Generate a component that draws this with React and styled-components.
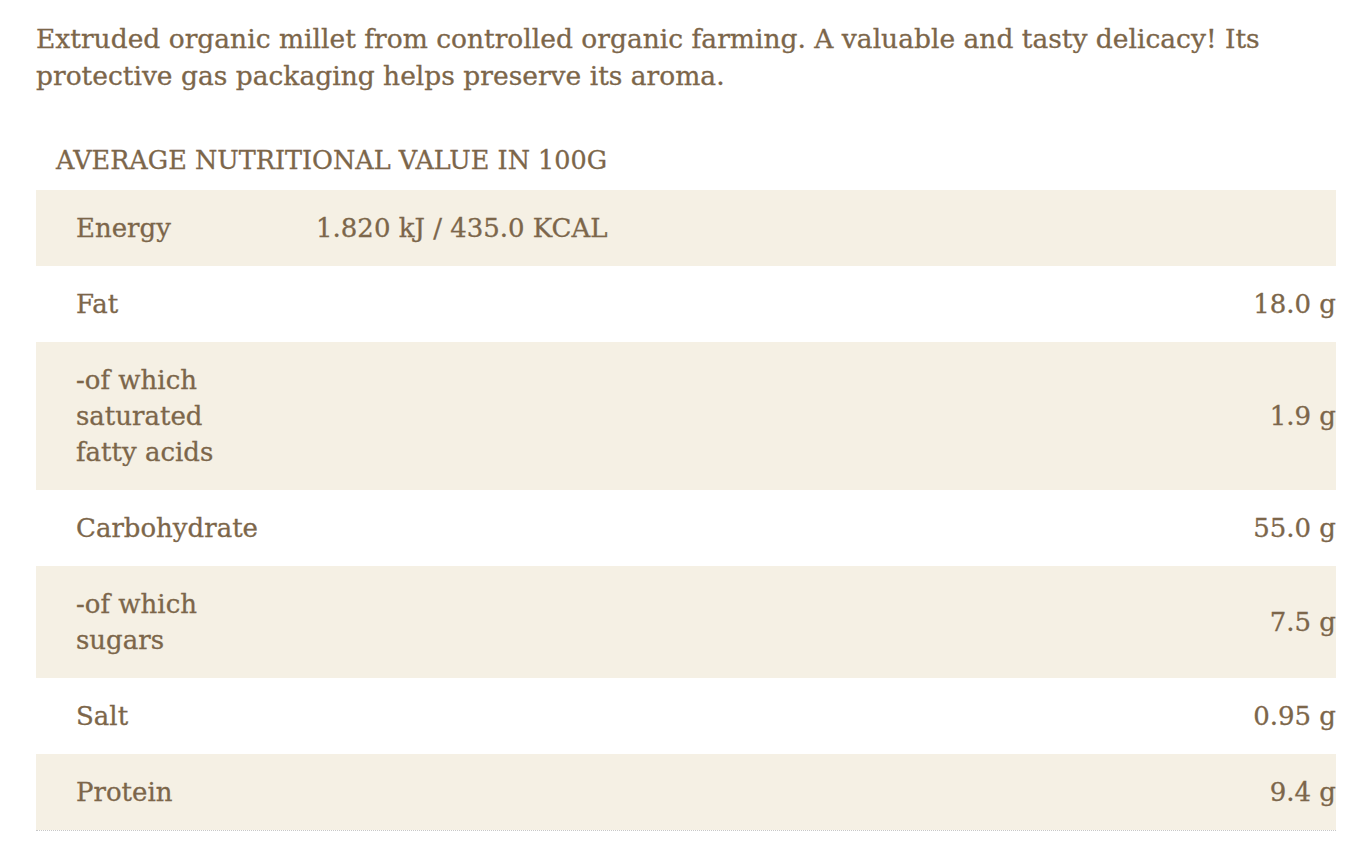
import React from 'react';
import styled, { createGlobalStyle } from 'styled-components';

const GlobalStyle = createGlobalStyle`
  body {
    margin: 0;
    background: #fff;
    font-family: 'DejaVu Serif', 'Liberation Serif', serif;
    color: rgb(124, 102, 74);
    -webkit-text-stroke: 0.3px rgb(124, 102, 74);
  }
`;

const Page = styled.main`
  width: 1300px;
  padding: 20px 0 0 36px;
`;

const Intro = styled.p`
  margin: 0 0 48px;
  font-size: 26.5px;
  line-height: 37px;
`;

const Caption = styled.h3`
  margin: 0;
  padding: 0 0 12px 20px;
  font-size: 25.5px;
  font-weight: 400;
  line-height: 36px;
  text-transform: uppercase;
`;

const Table = styled.div`
  border-bottom: 1px dotted #c8c8c8;
`;

const Row = styled.div`
  display: grid;
  grid-template-columns: 240px 1fr auto;
  align-items: center;
  padding: 20px 0 20px 40px;
  background: ${(p) => (p.$shaded ? 'rgb(245, 240, 228)' : 'transparent')};
  font-size: 26px;
  line-height: 36px;
`;

const Label = styled.div`
  white-space: nowrap;
`;

const Value = styled.div`
  text-align: ${(p) => (p.$right ? 'right' : 'left')};
  white-space: nowrap;
`;

const rows = [
  { label: ['Fat'], value: '18.0 g' },
  { label: ['-of which', 'saturated', 'fatty acids'], value: '1.9 g' },
  { label: ['Carbohydrate'], value: '55.0 g' },
  { label: ['-of which', 'sugars'], value: '7.5 g' },
  { label: ['Salt'], value: '0.95 g' },
  { label: ['Protein'], value: '9.4 g' },
];

export default function App() {
  return (
    <Page>
      <GlobalStyle />
      <Intro>
        Extruded organic millet from controlled organic farming. A valuable and tasty delicacy! Its
        protective gas packaging helps preserve its aroma.
      </Intro>
      <Caption>Average nutritional value in 100g</Caption>
      <Table>
        <Row $shaded>
          <Label>Energy</Label>
          <Value>1.820 kJ / 435.0 KCAL</Value>
          <Value $right />
        </Row>
        {rows.map((r, i) => (
          <Row key={r.value} $shaded={i % 2 === 1}>
            <Label>
              {r.label.map((l, j) => (
                <React.Fragment key={l}>
                  {j > 0 && <br />}
                  {l}
                </React.Fragment>
              ))}
            </Label>
            <span />
            <Value $right>{r.value}</Value>
          </Row>
        ))}
      </Table>
    </Page>
  );
}
